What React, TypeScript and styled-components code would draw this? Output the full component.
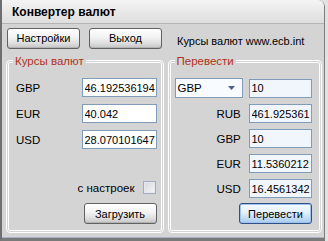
import React from 'react';
import styled, { createGlobalStyle } from 'styled-components';

const Global = createGlobalStyle`
  html, body { margin: 0; padding: 0; background: #dedede; }
  body { font-family: "Liberation Sans", Arial, sans-serif; font-size: 11px; color: #000; }
  * { box-sizing: border-box; }
`;

const Screen = styled.div`
  width: 328px;
  height: 241px;
  overflow: hidden;
  display: flex;
  background: #e2e2e2;
`;

const Window = styled.div`
  width: 325px;
  height: 241px;
  display: flex;
  flex-direction: column;
  background: #d4d4d4;
  border-left: 2px solid #6e6e6e;
  border-right: 1px solid #7c7c7c;
  border-bottom: 3px solid #7a7a7a;
  border-top-right-radius: 7px;
  box-shadow: inset 0 -1px 0 #a9b2c4;
`;

const TitleBar = styled.div`
  height: 24px;
  flex: none;
  display: flex;
  align-items: center;
  padding-left: 10px;
  font-weight: bold;
  font-size: 12px;
  background: linear-gradient(#f4f4f4, #e6e6e6 60%, #dedede);
  border-bottom: 1px solid #b4b4b4;
  border-top-right-radius: 6px;
`;

const Body = styled.div`
  flex: 1;
  display: flex;
  flex-direction: column;
  padding: 3px 2px 0 5px;
`;

const TopRow = styled.div`
  display: flex;
  align-items: center;
  gap: 9px;
  height: 22px;
`;

const Button = styled.button<{ $primary?: boolean }>`
  width: 73px;
  height: 21px;
  padding: 0;
  font-family: inherit;
  font-size: 11px;
  color: #000;
  border-radius: 3px;
  border: 1px solid ${p => (p.$primary ? '#2f4f86' : '#616161')};
  background: ${p =>
    p.$primary
      ? 'linear-gradient(#f6fbff, #e4f0fc 45%, #c3dcf4 75%, #a6cbef)'
      : 'linear-gradient(#ffffff, #f2f2f2 45%, #dedede 75%, #c4c4c4)'};
  box-shadow: ${p => (p.$primary ? 'inset 0 0 0 1px #9cc4ee' : 'inset 0 -1px 0 #b4b4b4')};
`;

const Source = styled.span`
  margin-left: 6px;
  padding-top: 6px;
`;

const Groups = styled.div`
  display: flex;
  gap: 4px;
  margin-top: 5px;
  margin-left: -1px;
`;

const Group = styled.fieldset<{ $w: number }>`
  width: ${p => p.$w}px;
  height: 179px;
  margin: 0;
  padding: 0;
  border: 3px double #ffffff;
  border-radius: 4px;
  min-width: 0;
`;

const Legend = styled.legend`
  margin-left: 4px;
  padding: 0 2px;
  color: #b0321c;
  font-size: 11.5px;
  line-height: 15px;
`;

const GroupInner = styled.div<{ $pl: number; $pr: number }>`
  height: 100%;
  display: flex;
  flex-direction: column;
  padding: 9px ${p => p.$pr}px 6px ${p => p.$pl}px;
`;

const RateRows = styled.div`
  display: grid;
  grid-template-columns: 1fr 75px;
  row-gap: 7px;
  align-items: center;
`;

const Label = styled.span<{ $pl?: number }>`
  padding-left: ${p => p.$pl ?? 0}px;
  font-size: 11.5px;
`;

const Field = styled.input<{ $tint?: boolean }>`
  width: 100%;
  height: 19px;
  padding: 0 0 0 2px;
  border: 1px solid #7f9db9;
  background: ${p => (p.$tint ? '#f1f6fd' : '#ffffff')};
  font-family: inherit;
  font-size: 11px;
  color: #000;
  outline: none;
`;

const CheckRow = styled.label`
  margin-top: auto;
  display: flex;
  justify-content: flex-end;
  align-items: center;
  gap: 8px;
  padding-right: 1px;
  font-size: 11.5px;
`;

const Check = styled.span`
  width: 13px;
  height: 13px;
  border: 1px solid #a3adc0;
  background: linear-gradient(135deg, #d6d9e1, #f6f6f8);
  box-shadow: inset 0 0 0 1px #e6e8ee;
`;

const ButtonRow = styled.div<{ $push?: boolean }>`
  display: flex;
  justify-content: flex-end;
  margin-top: ${p => (p.$push ? 'auto' : '9px')};
`;

const ConvRows = styled.div`
  display: grid;
  grid-template-columns: 68px 63px;
  column-gap: 6px;
  row-gap: 6px;
  align-items: center;
`;

const Select = styled.div`
  height: 20px;
  border: 1px solid #7f9db9;
  background: #f8fbff;
  display: flex;
  align-items: center;
  justify-content: space-between;
  padding: 0 7px 0 2px;
  font-size: 11.5px;
`;

const Arrow = styled.svg`
  width: 7px;
  height: 4px;
`;

const rates = [
  ['GBP', '46.192536194'],
  ['EUR', '40.042'],
  ['USD', '28.070101647'],
];

const results = [
  ['RUB', '461.925361'],
  ['GBP', '10'],
  ['EUR', '11.5360212'],
  ['USD', '16.4561342'],
];

export default function App() {
  return (
    <Screen>
      <Global />
      <Window>
        <TitleBar>Конвертер валют</TitleBar>
        <Body>
          <TopRow>
            <Button>Настройки</Button>
            <Button>Выход</Button>
            <Source>Курсы валют www.ecb.int</Source>
          </TopRow>
          <Groups>
            <Group $w={158}>
              <Legend>Курсы валют</Legend>
              <GroupInner $pl={7} $pr={4}>
                <RateRows>
                  {rates.map(([c, v]) => (
                    <React.Fragment key={c}>
                      <Label>{c}</Label>
                      <Field defaultValue={v} />
                    </React.Fragment>
                  ))}
                </RateRows>
                <CheckRow>
                  с настроек
                  <Check />
                </CheckRow>
                <ButtonRow>
                  <Button>Загрузить</Button>
                </ButtonRow>
              </GroupInner>
            </Group>
            <Group $w={155}>
              <Legend>Перевести</Legend>
              <GroupInner $pl={4} $pr={7}>
                <ConvRows>
                  <Select>
                    GBP
                    <Arrow viewBox="0 0 7 4">
                      <path d="M0 0H7L3.5 4Z" fill="#4d6185" />
                    </Arrow>
                  </Select>
                  <Field $tint defaultValue="10" />
                  {results.map(([c, v]) => (
                    <React.Fragment key={c}>
                      <Label $pl={42}>{c}</Label>
                      <Field $tint defaultValue={v} />
                    </React.Fragment>
                  ))}
                </ConvRows>
                <ButtonRow $push>
                  <Button $primary>Перевести</Button>
                </ButtonRow>
              </GroupInner>
            </Group>
          </Groups>
        </Body>
      </Window>
    </Screen>
  );
}
